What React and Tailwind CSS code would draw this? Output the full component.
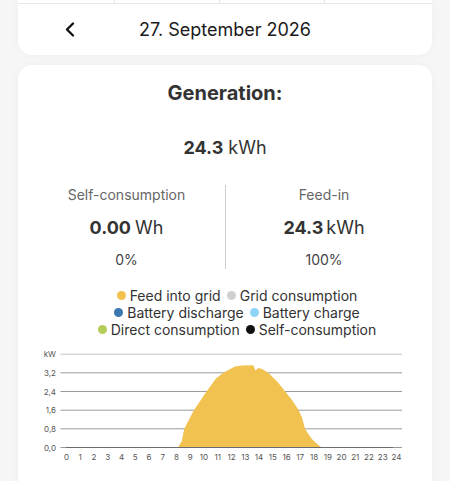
import React from "react";

const legendRows = [
  [
    { label: "Feed into grid", color: "bg-[#f2c14e]" },
    { label: "Grid consumption", color: "bg-[#d0d0d0]" },
  ],
  [
    { label: "Battery discharge", color: "bg-[#3b78b0]" },
    { label: "Battery charge", color: "bg-[#8fd3f7]" },
  ],
  [
    { label: "Direct consumption", color: "bg-[#b4cc5a]" },
    { label: "Self-consumption", color: "bg-[#111111]" },
  ],
];

const yLabels = [
  { text: "kW", y: 354.7 },
  { text: "3,2", y: 373.3 },
  { text: "2,4", y: 392 },
  { text: "1,6", y: 410.7 },
  { text: "0,8", y: 429.3 },
  { text: "0,0", y: 448 },
];

// generation curve, in page coordinates
const curve = [
  [178, 448], [181.7, 441.7], [184.3, 429.3], [193.3, 411.7], [206.7, 391.7],
  [216, 379], [223.3, 373.3], [235, 367], [242, 366], [253.3, 365.8],
  [255.5, 371], [258.5, 368.5], [262, 369.5], [268.3, 373.3], [278, 383],
  [285, 391.7], [292, 400.5], [298.3, 410], [302, 418], [305, 429.3],
  [308, 434], [311.7, 439.3], [316, 443.5], [321.7, 448],
];

function Chart() {
  const d =
    "M" + curve.map(([x, y]) => `${x},${y}`).join(" L") + " Z";
  return (
    <svg
      className="mt-[6px] block"
      width="414"
      height="126"
      viewBox="18 344.5 414 126"
    >
      {yLabels.map((l, i) => (
        <g key={l.text}>
          <line
            x1="60.5"
            x2="402"
            y1={l.y}
            y2={l.y}
            stroke={i === 0 ? "#c4c4c4" : "#9a9a9a"}
            strokeWidth="1"
          />
          <text
            x="56"
            y={l.y + 3}
            fontSize="8"
            textAnchor="end"
            fill="#555"
          >
            {l.text}
          </text>
        </g>
      ))}
      <path d={d} fill="#f2c250" />
      <line x1="66" x2="393" y1="448" y2="448" stroke="#6b6b6b" strokeWidth="1.2" />
      {Array.from({ length: 25 }).map((_, h) => (
        <text
          key={h}
          x={66.5 + h * 13.75}
          y="460.5"
          fontSize="8"
          textAnchor="middle"
          fill="#555"
        >
          {h}
        </text>
      ))}
    </svg>
  );
}

function App() {
  return (
    <div className="min-h-[481px] bg-[#f6f6f6] px-[18px] font-['Inter','Noto_Sans',sans-serif] text-[#222]">
      {/* Date header */}
      <div className="flex h-[55px] flex-col rounded-b-[14px] bg-white shadow-[0_0_8px_rgba(0,0,0,0.04)]">
        <div className="flex h-[4px] border-b border-[#e8e8e8]">
          <div className="w-[97px] border-r border-[#e4e4e4]" />
          <div className="w-[105px] border-r border-[#e4e4e4]" />
          <div className="w-[105px] border-r border-[#e4e4e4]" />
          <div className="flex-1" />
        </div>
        <div className="grid flex-1 grid-cols-[1fr_auto_1fr] items-center">
          <div className="pl-[47px]">
            <svg width="10" height="15" viewBox="0 0 10 15" className="block">
              <path
                d="M8 1.5 L2 7.5 L8 13.5"
                fill="none"
                stroke="#111"
                strokeWidth="2.3"
                strokeLinecap="round"
                strokeLinejoin="round"
              />
            </svg>
          </div>
          <div className="text-[18px] leading-[24px] text-[#1a1a1a]">27. September 2026</div>
          <div />
        </div>
      </div>

      {/* Generation card */}
      <div className="mt-[10px] rounded-[14px] bg-white pt-[16px] pb-10 shadow-[0_0_8px_rgba(0,0,0,0.04)]">
        <h2 className="text-center text-[20px] font-bold leading-[24px] text-[#333]">Generation:</h2>
        <div className="mt-[31px] text-center text-[18px] leading-[24px] text-[#333]">
          <span className="font-bold">24.3</span> kWh
        </div>

        <div className="mt-[25px] grid grid-cols-2 px-[10px]">
          <div className="flex flex-col items-center">
            <div className="text-[14px] leading-[20px] text-[#666]">Self-consumption</div>
            <div className="mt-[11px] text-[18px] leading-[24px] text-[#333]">
              <span className="font-bold">0.00</span>
              <span className="ml-[4px]">Wh</span>
            </div>
            <div className="mt-[11px] text-[14px] leading-[18px] text-[#444]">0%</div>
          </div>
          <div className="flex flex-col items-center border-l border-[#cfcfcf]">
            <div className="text-[14px] leading-[20px] text-[#666]">Feed-in</div>
            <div className="mt-[11px] text-[18px] leading-[24px] text-[#333]">
              <span className="font-bold">24.3</span>
              <span className="ml-[3px]">kWh</span>
            </div>
            <div className="mt-[11px] text-[14px] leading-[18px] text-[#444]">100%</div>
          </div>
        </div>

        <div className="mt-[18px] flex flex-col items-center pl-[24px]">
          {legendRows.map((row, i) => (
            <div key={i} className="flex items-center gap-[6px] text-[14px] leading-[17px] text-[#333]">
              {row.map((item) => (
                <div key={item.label} className="flex items-center gap-[4px]">
                  <span className={`h-[9px] w-[9px] rounded-full ${item.color}`} />
                  <span>{item.label}</span>
                </div>
              ))}
            </div>
          ))}
        </div>

        <Chart />
      </div>
    </div>
  );
}

export default App;
